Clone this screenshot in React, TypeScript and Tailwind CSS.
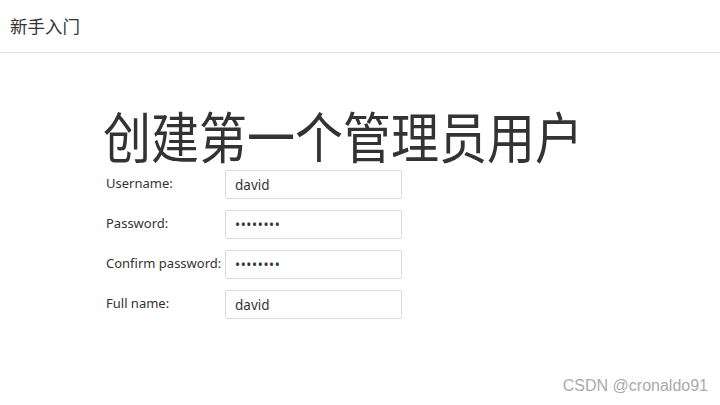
import React from 'react';

const fields = [
  { label: 'Username:', value: 'david', type: 'text' },
  { label: 'Password:', value: 'password', type: 'password' },
  { label: 'Confirm password:', value: 'password', type: 'password' },
  { label: 'Full name:', value: 'david', type: 'text' },
];

const App: React.FC = () => {
  return (
    <div
      className="relative w-[720px] h-[405px] bg-white text-[#333] overflow-hidden"
      style={{ fontFamily: '"Noto Sans", "Noto Sans CJK SC", sans-serif' }}
    >
      <header className="h-[53px] border-b border-[#e5e5e5] flex items-center px-[10px]">
        <span className="text-[17.5px] text-[#333]">新手入门</span>
      </header>

      <main className="pl-[103px] pt-[53px]">
        <h1 className="text-[48px] leading-[64px] font-normal text-[#333] origin-left scale-y-[1.13]">
          创建第一个管理员用户
        </h1>
        <div className="flex flex-col gap-[11px] pl-[3px]">
          {fields.map((f) => (
            <div key={f.label} className="flex items-start h-[29px]">
              <label className="w-[119px] text-[13px] leading-[27px] text-[#333] whitespace-nowrap">
                {f.label}
              </label>
              <input
                type={f.type}
                defaultValue={f.value}
                readOnly
                className={
                  'w-[177px] h-[29px] border border-[#dcdcdc] rounded-[2px] px-[9px] text-[13.5px] text-[#333] outline-none' +
                  (f.type === 'password' ? ' tracking-[0.6px]' : '')
                }
              />
            </div>
          ))}
        </div>
      </main>

      <div
        className="absolute right-[12px] bottom-[7px] text-[16px] text-[#aaa]"
        style={{ fontFamily: '"Liberation Sans", sans-serif' }}
      >
        CSDN @cronaldo91
      </div>
    </div>
  );
};

export default App;
